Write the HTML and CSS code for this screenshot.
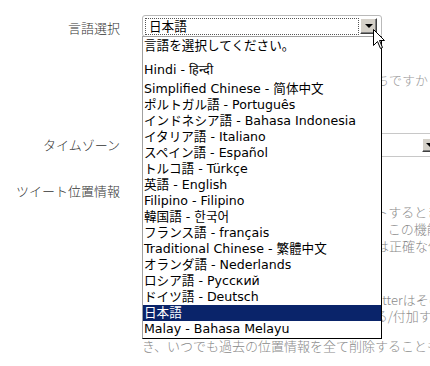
FILE: index.html
```html
<!DOCTYPE html>
<html lang="ja">
<head>
    <meta charset="UTF-8">
    <title>アカウント設定</title>
    <link rel="stylesheet" href="styles.css">
</head>
<body>

<div class="settings">
    <!-- 言語 -->
    <div class="row row-lang">
        <div class="row-label">言語選択</div>
        <div class="row-field">
            <div class="select">
                <div class="select-value">日本語</div>
                <div class="select-btn"><span class="arrow"></span></div>
            </div>
            <p class="help">ツイッター翻訳のお手伝いに興味をお持ちですか？ 翻訳センターへどうぞ。</p>
        </div>
    </div>

    <!-- タイムゾーン -->
    <div class="row row-tz">
        <div class="row-label">タイムゾーン</div>
        <div class="row-field">
            <div class="select select-tz">
                <div class="select-value">(GMT+09:00) 大阪</div>
                <div class="select-btn"><span class="arrow"></span></div>
            </div>
        </div>
    </div>

    <!-- ツイート位置情報 -->
    <div class="row row-geo">
        <div class="row-label">ツイート位置情報</div>
        <div class="row-field">
            <label class="check"><input type="checkbox"> ツイートに位置情報を付加する</label>
            <p class="help help-geo">設定をオンにすると、ユーザーがツイートするときに位置情報を付加できます。<br>市区町村など地域の情報を付加できます。この機能を使うとツイートの場所が<br>能をオンにした場合、ツイートした位置は正確な位置ではない場合があります。</p>
            <p class="help help-store">位置情報が付いたツイートに関して、Twitterはその情報を保存します。<br>を保存します。ツイートの場所を表示する/付加する設定は</p>
            <p class="help help-last">き、いつでも過去の位置情報を全て削除することもできます。</p>
        </div>
    </div>
</div>

<!-- 開いているドロップダウン -->
<ul class="lang-list">
    <li class="first">言語を選択してください。</li>
    <li class="hindi">Hindi - हिन्दी</li>
    <li>Simplified Chinese - 简体中文</li>
    <li>ポルトガル語 - Português</li>
    <li>インドネシア語 - Bahasa Indonesia</li>
    <li>イタリア語 - Italiano</li>
    <li>スペイン語 - Español</li>
    <li>トルコ語 - Türkçe</li>
    <li>英語 - English</li>
    <li>Filipino - Filipino</li>
    <li>韓国語 - 한국어</li>
    <li>フランス語 - français</li>
    <li>Traditional Chinese - 繁體中文</li>
    <li>オランダ語 - Nederlands</li>
    <li>ロシア語 - Русский</li>
    <li>ドイツ語 - Deutsch</li>
    <li class="selected">日本語</li>
    <li>Malay - Bahasa Melayu</li>
</ul>

<svg class="cursor" width="13" height="21" viewBox="0 0 13 21">
    <path d="M0.5 0.5 L0.5 16.5 L4.5 12.5 L7.5 19.5 L9.5 18.5 L6.5 11.5 L11.5 11.5 Z" fill="#fff" stroke="#000" stroke-width="1"/>
</svg>

</body>
</html>
```

FILE: styles.css
```css
html, body {
    margin: 0;
    padding: 0;
    overflow: hidden;
}

body {
    width: 430px;
    height: 366px;
    position: relative;
    background-color: #fff;
    font-family: "Noto Sans CJK JP", sans-serif;
    font-size: 13px;
    font-weight: 300;
    color: #333;
}

.settings {
    padding-top: 15px;
}

.row {
    display: grid;
    grid-template-columns: 120px 1fr;
    column-gap: 22px;
}

.row-label {
    text-align: right;
    line-height: 17px;
    white-space: nowrap;
}

.row-field {
    min-width: 0;
    white-space: nowrap;
}

/* セレクトボックス */
.select {
    display: flex;
    align-items: center;
    gap: 1px;
    box-sizing: border-box;
    width: 240px;
    height: 22px;
    padding: 1px 4px 1px 2px;
    border: 1px solid #b9b9b9;
    border-radius: 3px;
    background-color: #fff;
}

.select-value {
    flex: 1;
    box-sizing: border-box;
    height: 17px;
    padding-left: 3px;
    border: 1px dotted #555;
    line-height: 15px;
    font-family: "DejaVu Sans", "Noto Sans CJK JP", sans-serif;
    font-size: 12.6px;
    font-weight: normal;
    color: #000;
    overflow: hidden;
}

.select-btn {
    display: flex;
    align-items: center;
    justify-content: center;
    box-sizing: border-box;
    width: 17px;
    height: 16px;
    background-color: #d4d0c8;
    border: 1px solid;
    border-color: #fff #404040 #404040 #fff;
    box-shadow: inset -1px -1px #808080;
}

.arrow {
    width: 0;
    height: 0;
    border-left: 4px solid transparent;
    border-right: 4px solid transparent;
    border-top: 4px solid #000;
}

.help {
    margin: 0;
    color: #8a8a8a;
    line-height: 17px;
}

.row-lang .row-label {
    padding-top: 4px;
}

.row-lang .help {
    margin-top: 34px;
    color: #9a9a9a;
}

.row-tz {
    margin-top: 45px;
}

.row-tz .row-label {
    line-height: 24px;
}

.select-tz {
    width: 300px;
    height: 24px;
    padding: 3px;
    border-color: #c8c8c8;
    border-radius: 0;
}

.select-tz .select-value {
    border: none;
}

.select-tz .select-btn {
    width: 16px;
    height: 14px;
}

.row-geo {
    margin-top: 25px;
}

.check {
    display: block;
    line-height: 17px;
}

.check input {
    margin: 0 4px 0 0;
    vertical-align: -2px;
}

.help-geo {
    margin-top: 4px;
}

.help-store {
    margin-top: 38px;
    line-height: 16px;
}

.help-last {
    margin-top: 14px;
    line-height: 16px;
}

/* 開いた言語リスト */
.lang-list {
    position: absolute;
    left: 142px;
    top: 36px;
    box-sizing: border-box;
    width: 240px;
    height: 303px;
    margin: 0;
    padding: 0;
    list-style: none;
    border: 1px solid #000;
    border-left-color: #a0a0a0;
    border-top-color: #a0a0a0;
    background-color: #fff;
    font-family: "DejaVu Sans", "Noto Sans CJK JP", sans-serif;
    font-size: 12.6px;
    font-weight: normal;
    color: #000;
    overflow: hidden;
}

.lang-list li {
    box-sizing: border-box;
    height: 16px;
    line-height: 16px;
    padding-left: 1px;
    white-space: nowrap;
    overflow: hidden;
}

.lang-list li.first {
    height: 18px;
    line-height: 18px;
}

.lang-list li.hindi {
    height: 26px;
    padding-top: 7px;
}

.lang-list li.selected {
    background-color: #0a246a;
    color: #fff;
}

.cursor {
    position: absolute;
    left: 373px;
    top: 29px;
}
```
